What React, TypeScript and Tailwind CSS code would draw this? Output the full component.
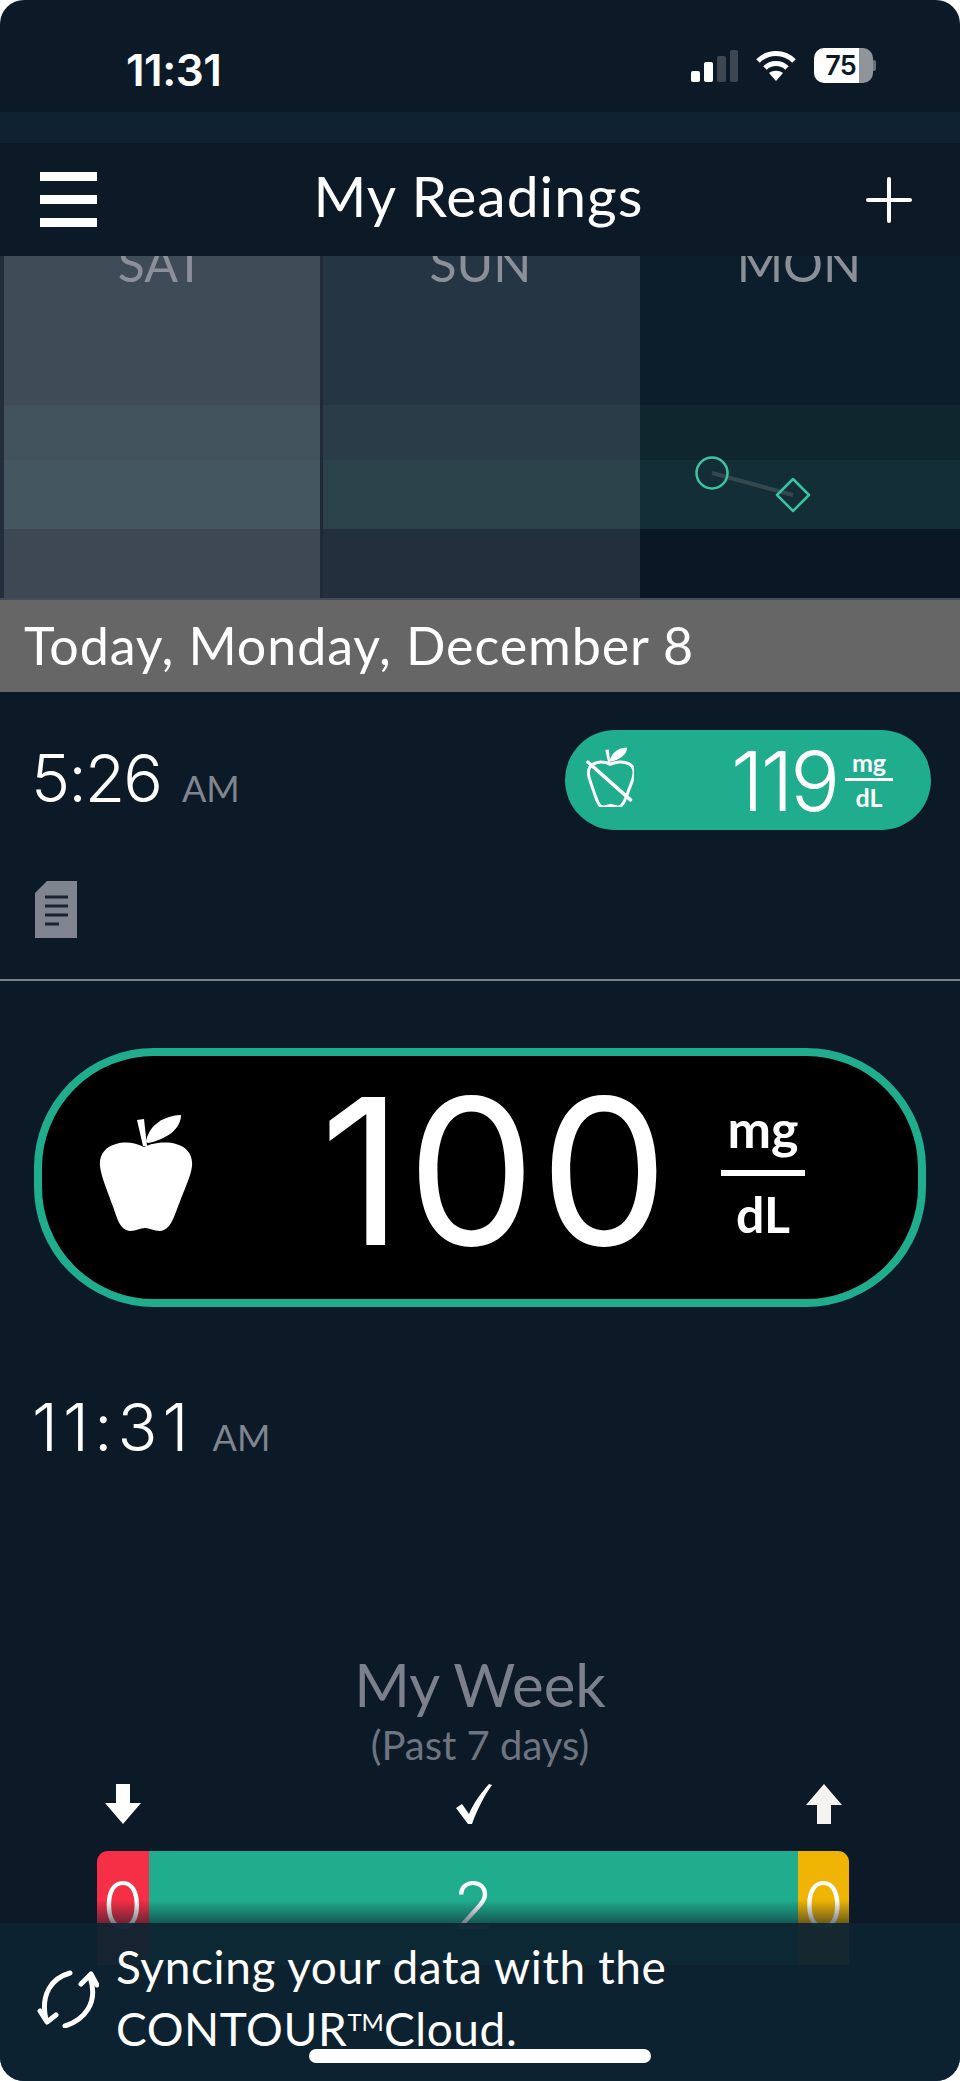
import React from 'react';

const FONT = "font-['Lato','Noto_Sans',sans-serif]";
const DIGITS = "font-['Inter',sans-serif]";

interface DayColumn {
  label: string;
  bands: string[];
  width: string;
}

const days: DayColumn[] = [
  { label: 'SAT', width: 'w-[319px]', bands: ['bg-[#3f4b57]', 'bg-[#41525c]', 'bg-[#44575f]', 'bg-[#3e4853]'] },
  { label: 'SUN', width: 'w-[317px]', bands: ['bg-[#263543]', 'bg-[#2a3c47]', 'bg-[#2c424b]', 'bg-[#232f3d]'] },
  { label: 'MON', width: 'w-[320px]', bands: ['bg-[#0c1e2c]', 'bg-[#10262f]', 'bg-[#132e36]', 'bg-[#0a1826]'] },
];

const APPLE_BODY =
  'M46 33 C38 29 28 27 18 30 C7 33 1 41 2 52 C3 62 9 76 14 90 C18 100 20 112 28 116 C35 119 41 114 47 114 C53 114 59 119 66 116 C74 112 77 100 81 90 C86 76 93 62 94 52 C95 41 89 33 78 30 C68 27 54 29 46 33 Z';
const APPLE_LEAF = 'M48 28 C50 14 62 2 83 1 C83 14 70 25 50 29 Z';
const APPLE_STEM = 'M39 6 L46 5 L49 32 L45 32 Z';

function AppleIcon({ className, crossed }: { className: string; crossed?: boolean }) {
  if (crossed) {
    return (
      <svg viewBox="0 0 97 118" preserveAspectRatio="none" className={className} fill="none" stroke="white" strokeWidth="6" strokeLinejoin="round">
        <path d={APPLE_BODY} transform="translate(3 1)" />
        <path d={APPLE_LEAF} fill="white" stroke="none" />
        <path d={APPLE_STEM} fill="white" stroke="none" />
        <path d="M4 30 L90 104" strokeWidth="7" strokeLinecap="round" />
      </svg>
    );
  }
  return (
    <svg viewBox="0 0 97 118" preserveAspectRatio="none" className={className} fill="white">
      <path d={APPLE_BODY} />
      <path d={APPLE_LEAF} />
      <path d={APPLE_STEM} />
    </svg>
  );
}

function StatusBar() {
  return (
    <div className="h-[112px] flex items-start justify-between pt-[47px] pl-[126px] pr-[84px]">
      <span className={`${DIGITS} font-semibold text-[44px] leading-[47px] tracking-[-0.5px] text-white`}>11:31</span>
      <div className="flex items-center gap-[17px] pt-[1px]">
        {/* signal */}
        <div className="flex items-end gap-[4px] h-[32px]">
          <div className="w-[9px] h-[11px] rounded-[2px] bg-white" />
          <div className="w-[9px] h-[20px] rounded-[2px] bg-white" />
          <div className="w-[9px] h-[26px] rounded-[2px] bg-[#3d4751]" />
          <div className="w-[8px] h-[32px] rounded-[2px] bg-[#3d4751]" />
        </div>
        <svg viewBox="0 0 42 32" className="w-[42px] h-[32px]" fill="none" stroke="white" strokeWidth="5">
          <path d="M3 11 C13 1 29 1 39 11" />
          <path d="M10 18 C16 12 26 12 32 18" />
          <path d="M21 31 L14 23 C18 20 24 20 28 23 Z" fill="white" stroke="none" />
        </svg>
        {/* battery */}
        <div className="flex items-center">
          <div className="w-[59px] h-[35px] rounded-[10px] overflow-hidden bg-[linear-gradient(90deg,#ffffff_77%,#8f959b_77%)] flex items-center justify-center">
            <span className={`${DIGITS} font-semibold text-[27px] leading-none tracking-[-1px] text-[#0c1a28] -ml-[6px]`}>75</span>
          </div>
          <div className="w-[3px] h-[11px] rounded-r-[2px] bg-[#6a7178]" />
        </div>
      </div>
    </div>
  );
}

function Header() {
  return (
    <div className="h-[113px] flex items-center justify-between pl-[40px] pr-[48px] relative z-10 bg-[#0c1a28]">
      <div className="flex flex-col gap-[14px] w-[57px]">
        <div className="h-[9px] bg-white" />
        <div className="h-[9px] bg-white" />
        <div className="h-[9px] bg-white" />
      </div>
      <span className="text-[57px] leading-none tracking-[1px] text-white -mt-[9px] -ml-[6px]">My Readings</span>
      <svg viewBox="0 0 46 46" className="w-[46px] h-[46px]" stroke="white" strokeWidth="4" strokeLinecap="round">
        <path d="M23 2 V44 M2 23 H44" />
      </svg>
    </div>
  );
}

function WeekChart() {
  return (
    <div className="h-[344px] flex overflow-hidden bg-[#1f2a36] border-b-[2px] border-[#444c57]">
      <div className="w-[4px] shrink-0 bg-[#222e3b]" />
      {days.map((day) => (
        <div key={day.label} className={`${day.width} shrink-0 relative flex flex-col ${day.label === 'SAT' ? 'border-r-[3px] border-[#1f2a36]' : ''}`}>
          <div className={`h-[149px] ${day.bands[0]} flex justify-center`}>
            <span className="text-[50px] leading-none text-[#8a8f98] -mt-[18px] -ml-[2px]">{day.label}</span>
          </div>
          <div className={`h-[55px] ${day.bands[1]}`} />
          <div className={`h-[69px] ${day.bands[2]}`} />
          <div className={`h-[69px] ${day.bands[3]}`} />
          {day.label === 'MON' && (
            <svg viewBox="0 0 320 342" className="absolute inset-0 w-[320px] h-[342px]" fill="none">
              <path d="M72 217 L153 239" stroke="#33494e" strokeWidth="4" />
              <circle cx="72" cy="217" r="15.5" stroke="#3cc3a0" strokeWidth="2.5" />
              <path d="M153 223 L169 239 L153 255 L137 239 Z" stroke="#3cc3a0" strokeWidth="2.5" strokeLinejoin="round" />
            </svg>
          )}
        </div>
      ))}
    </div>
  );
}

function TimeLabel({ time, spacing }: { time: string; spacing: string }) {
  return (
    <div className="flex items-baseline text-white -ml-[2px]">
      <span className={`${DIGITS} text-[66px] leading-none font-light ${spacing}`}>{time}</span>
      <span className="text-[36px] leading-none text-[#80858f]">AM</span>
    </div>
  );
}

function EarlierReading() {
  return (
    <div className="h-[289px] border-b-[2px] border-[#7b8087] relative pl-[33px] pr-[29px]">
      <div className="flex justify-between pt-[38px]">
        <div className="pt-[15px]">
          <TimeLabel time="5:26" spacing="tracking-[-2px] mr-[21px]" />
        </div>
        <div className="w-[366px] h-[100px] rounded-[50px] bg-[#20ad8e] flex items-center pl-[21px] text-white">
          <AppleIcon className="w-[48px] h-[60px] -mt-[6px]" crossed />
          <span className={`${DIGITS} text-[83px] leading-none font-light ml-[97px] mt-[2px] tracking-[-3px] w-[106px]`}>119</span>
          <div className="flex flex-col items-center w-[48px] ml-[8px] -mt-[2px]">
            <span className="text-[25px] leading-[28px] font-bold">mg</span>
            <div className="h-[3px] w-[48px] bg-white my-[2px]" />
            <span className="text-[25px] leading-[28px] font-bold">dL</span>
          </div>
        </div>
      </div>
      <svg viewBox="0 0 42 57" className="w-[42px] h-[57px] mt-[51px] ml-[2px]">
        <path d="M12 0 H42 V57 H0 V12 Z" fill="#80848f" />
        <path d="M10 16 H33 M10 25 H33 M10 34 H33 M10 43 H24" stroke="#1a2230" strokeWidth="3" />
      </svg>
    </div>
  );
}

function CurrentReading() {
  return (
    <div className="pt-[67px] px-[34px]">
      <div className="h-[259px] rounded-[120px] border-[8px] border-[#20ad8e] bg-black flex items-center pl-[56px] text-white">
        <AppleIcon className="w-[97px] h-[118px] -mt-[10px] shrink-0" />
        <span className={`${DIGITS} text-[204px] leading-none ml-[125px] -mt-[14px] tracking-[4px] w-[380px] shrink-0`}>100</span>
        <div className="flex flex-col items-center w-[84px] ml-[21px] -mt-[14px] shrink-0">
          <span className="text-[52px] leading-[52px] font-bold">mg</span>
          <div className="h-[6px] w-[84px] bg-white mt-[16px] mb-[12px]" />
          <span className="text-[50px] leading-[52px] font-bold">dL</span>
        </div>
      </div>
      <div className="mt-[87px]">
        <TimeLabel time="11:31" spacing="tracking-[5px] mr-[19px]" />
      </div>
    </div>
  );
}

function MyWeek() {
  return (
    <div className="pt-[188px] flex flex-col items-center">
      <span className="text-[60px] leading-[72px] text-[#7b808a]">My Week</span>
      <span className="text-[40px] leading-[50px] text-[#6f7580]">(Past 7 days)</span>
      <div className="w-[752px] -ml-[14px] mt-[14px]">
        <div className="flex justify-between pl-[8px] pr-[7px] pb-[27px]">
          <svg viewBox="0 0 36 40" className="w-[36px] h-[40px]" fill="white">
            <path d="M11 0 H25 V19 H36 L18 40 L0 19 H11 Z" />
          </svg>
          <svg viewBox="0 0 36 40" className="w-[36px] h-[40px]" fill="white">
            <path d="M0 24 L6 20 L13 30 C18 18 26 8 33 0 L36 1 C28 12 21 26 16 40 L12 40 Z" />
          </svg>
          <svg viewBox="0 0 36 40" className="w-[36px] h-[40px]" fill="#f5f3ef">
            <path d="M11 40 H25 V21 H36 L18 0 L0 21 H11 Z" />
          </svg>
        </div>
        <div className={`${DIGITS} flex h-[114px] rounded-t-[11px] overflow-hidden text-white text-[66px] font-light leading-none text-center`}>
          <div className="w-[52px] bg-[#f52f45] pt-[21px]">0</div>
          <div className="flex-1 bg-[#20ad8e] pt-[21px]">2</div>
          <div className="w-[51px] bg-[#efb404] pt-[21px]">0</div>
        </div>
      </div>
    </div>
  );
}

function SyncBanner() {
  return (
    <>
      <div className="absolute left-0 right-0 top-[1900px] h-[23px] bg-gradient-to-b from-[#0c1a2800] to-[#0c1a2890]" />
      <div className="absolute left-0 right-0 top-[1923px] h-[158px] bg-[#0c2231f5] flex pl-[37px]">
        <svg viewBox="0 0 62 58" className="w-[62px] h-[58px] mt-[47px]" fill="none" stroke="white" strokeWidth="5" strokeLinecap="round" strokeLinejoin="round">
          <path d="M33 3 C15 8 3 24 9 50" />
          <path d="M3 41 L10 52 L19 45" />
          <path d="M28 56 C47 50 62 33 53 7" />
          <path d="M44 14 L54 4 L60 15" />
        </svg>
        <div className="ml-[17px] pt-[13px] text-[46px] leading-[62px] tracking-[0.6px] text-white">
          <div>Syncing your data with the</div>
          <div>
            CONTOUR<span className="relative -top-[15px] text-[24px] leading-none tracking-normal">TM</span>Cloud.
          </div>
        </div>
      </div>
      <div className="absolute left-[309px] top-[2049px] w-[342px] h-[14px] rounded-full bg-white" />
    </>
  );
}

export default function App() {
  return (
    <div className="bg-white w-[960px] h-[2081px]">
      <div className={`${FONT} relative w-[960px] h-[2081px] overflow-hidden rounded-[24px] bg-[#0c1a28]`}>
        <StatusBar />
        <div className="h-[31px] bg-[#0f2231]" />
        <Header />
        <WeekChart />
        <div className="h-[92px] bg-[#666666] flex items-center pl-[24px] pb-[3px] text-[52px] tracking-[0.9px] text-white">
          Today, Monday, December 8
        </div>
        <EarlierReading />
        <CurrentReading />
        <MyWeek />
        <SyncBanner />
      </div>
    </div>
  );
}
